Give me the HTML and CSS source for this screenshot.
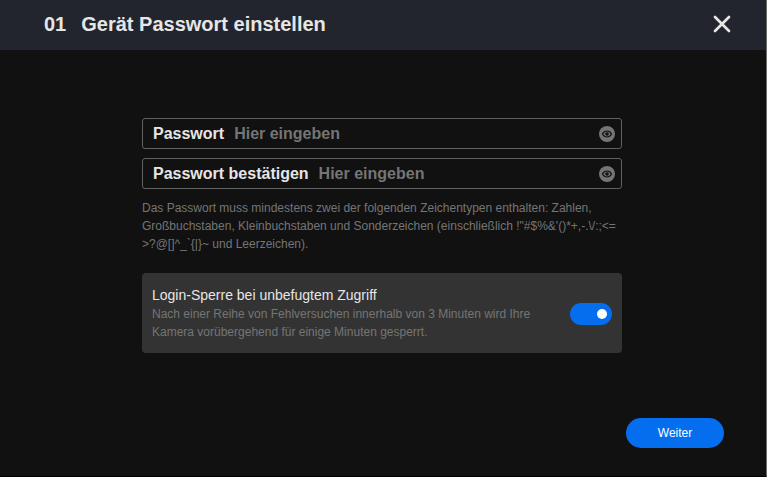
FILE: index.html
```html
<!DOCTYPE html>
<html lang="de">
<head>
  <meta charset="utf-8">
  <title>Gerät Passwort einstellen</title>
  <link rel="stylesheet" href="styles.css">
</head>

<body>
  <header>
    <h1><span class="step">01</span>Gerät Passwort einstellen</h1>
    <button type="button" class="close-button" aria-label="Schließen">
      <svg width="18" height="18" viewBox="0 0 18 18">
        <path d="M2 2L16 16M16 2L2 16" stroke="#e6e6e6" stroke-width="2.7" stroke-linecap="round"/>
      </svg>
    </button>
  </header>

  <form id="password-form">
    <div class="form-content">
      <div class="form-group">
        <label for="password">Passwort</label>
        <input type="password" id="password" placeholder="Hier eingeben">
        <button type="button" class="eye-button" aria-label="Passwort anzeigen">
          <svg width="16" height="16" viewBox="0 0 16 16">
            <circle cx="8" cy="8" r="8" fill="#757575"/>
            <path d="M3.5 8C5.5 4 10.5 4 12.5 8C10.5 12 5.5 12 3.5 8Z" fill="none" stroke="#111" stroke-width="1.2"/>
            <circle cx="8" cy="8" r="1.8" fill="#111"/>
          </svg>
        </button>
      </div>
      <div class="form-group">
        <label for="password-confirm">Passwort bestätigen</label>
        <input type="password" id="password-confirm" placeholder="Hier eingeben">
        <button type="button" class="eye-button" aria-label="Passwort anzeigen">
          <svg width="16" height="16" viewBox="0 0 16 16">
            <circle cx="8" cy="8" r="8" fill="#757575"/>
            <path d="M3.5 8C5.5 4 10.5 4 12.5 8C10.5 12 5.5 12 3.5 8Z" fill="none" stroke="#111" stroke-width="1.2"/>
            <circle cx="8" cy="8" r="1.8" fill="#111"/>
          </svg>
        </button>
      </div>
      <p class="hint">Das Passwort muss mindestens zwei der folgenden Zeichentypen enthalten: Zahlen, Großbuchstaben, Kleinbuchstaben und Sonderzeichen (einschließlich !"#$%&amp;'()*+,-.\/:;&lt;=<wbr>&gt;?@[]^_`{|}~ und Leerzeichen).</p>

      <div class="lock-panel">
        <div class="lock-text">
          <label for="login-lock">Login-Sperre bei unbefugtem Zugriff</label>
          <p>Nach einer Reihe von Fehlversuchen innerhalb von 3 Minuten wird Ihre Kamera vorübergehend für einige Minuten gesperrt.</p>
        </div>
        <input type="checkbox" id="login-lock" class="switch" role="switch" checked>
      </div>
    </div>

    <div class="form-actions">
      <button type="submit" class="next-button">Weiter</button>
    </div>
  </form>
</body>
</html>
```

FILE: styles.css
```css
* {
  box-sizing: border-box;
}
body {
  font-family: "Liberation Sans", Arial, sans-serif;
  background: #111;
  color: #e6e6e6;
  margin: 0;
  min-height: 100vh;
  border-right: 1px solid #6b6b6b;
  border-bottom: 1px solid #000;
}
header {
  display: flex;
  align-items: center;
  justify-content: space-between;
  height: 50px;
  padding: 0 35px 2px 44px;
  background: #22252d;
}
h1 {
  margin: 0;
  font-size: 20px;
  line-height: 24px;
}
.step {
  margin-right: 15px;
}
button {
  border: none;
  padding: 0;
  background: none;
  font-family: inherit;
  cursor: pointer;
}
.close-button {
  display: flex;
}
form {
  padding: 68px 42px 0 40px;
}
.form-content {
  max-width: 480px;
  margin: 0 auto;
}
.form-group {
  display: flex;
  align-items: center;
  height: 31px;
  margin-bottom: 9px;
  padding: 0 6px 0 10px;
  border: 1px solid #606060;
  border-radius: 3px;
}
.form-group label {
  font-size: 16px;
  font-weight: bold;
  white-space: nowrap;
}
.form-group input {
  flex: 1;
  min-width: 0;
  margin: 0;
  padding: 0 10px;
  border: none;
  outline: none;
  background: transparent;
  color: #e6e6e6;
  font: bold 16px "Liberation Sans", Arial, sans-serif;
}
.form-group input::placeholder {
  color: #757575;
}
.eye-button {
  display: flex;
}
.hint {
  margin: 10px 0 20px;
  font-size: 12px;
  line-height: 18px;
  color: #757575;
}
.lock-panel {
  display: flex;
  align-items: center;
  justify-content: space-between;
  padding: 13px 10px 12px;
  border-radius: 4px;
  background: #333;
}
.lock-text {
  max-width: 400px;
}
.lock-text label {
  display: block;
  margin-bottom: 1px;
  font-size: 14px;
  line-height: 18px;
}
.lock-text p {
  margin: 0;
  font-size: 12px;
  line-height: 18px;
  color: #757575;
}
.switch {
  appearance: none;
  display: flex;
  align-items: center;
  flex-shrink: 0;
  width: 42px;
  height: 22px;
  margin: 0;
  padding: 0 5px;
  border-radius: 11px;
  background: #555;
  cursor: pointer;
}
.switch::before {
  content: "";
  width: 10px;
  height: 10px;
  border-radius: 50%;
  background: #fff;
}
.switch:checked {
  justify-content: flex-end;
  background: #046eee;
}
.form-actions {
  display: flex;
  justify-content: flex-end;
  padding: 65px 0 28px;
}
.next-button {
  width: 98px;
  height: 30px;
  border-radius: 15px;
  background: #046eee;
  color: #fff;
  font-size: 12px;
}
.next-button:hover {
  background: #0560d0;
}
```
